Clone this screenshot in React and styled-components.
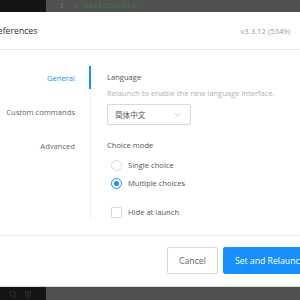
import React from 'react';
import styled, { createGlobalStyle } from 'styled-components';
import { Search, Trash2 } from 'lucide-react';

const GlobalStyle = createGlobalStyle`
  html, body {
    margin: 0;
    padding: 0;
    background: #515151;
  }
  * {
    box-sizing: border-box;
  }
`;

const Screen = styled.div`
  width: 300px;
  height: 300px;
  overflow: hidden;
  display: flex;
  flex-direction: column;
  font-family: 'Open Sans', 'Noto Sans', sans-serif;
  background: #515151;
`;

const Backdrop = styled.div`
  height: ${({ h }) => h}px;
  flex: none;
  display: grid;
  grid-template-columns: 46px 1fr;
  overflow: hidden;
`;

const SideMask = styled.div`
  background: #141416;
  display: flex;
  align-items: center;
  gap: 7px;
  padding-left: 9px;
  color: #3a3a3c;
`;

const EditorMask = styled.div`
  background: #515151;
  display: flex;
  align-items: flex-end;
  font-family: 'Liberation Mono', monospace;
  font-size: 8px;
  line-height: 10px;
  padding-bottom: 1px;
`;

const LineNo = styled.span`
  width: 28px;
  text-align: right;
  padding-right: 10px;
  color: #6f6f6f;
`;

const Code = styled.span`
  color: #3f7a3f;
`;

const Dialog = styled.div`
  height: 275px;
  flex: none;
  background: #fff;
  display: flex;
  flex-direction: column;
  border-bottom: 1px solid #dcdcdc;
`;

const Header = styled.div`
  height: 38px;
  flex: none;
  display: flex;
  align-items: center;
  justify-content: space-between;
  padding: 0 10px 0 0;
  border-bottom: 1px solid #ebebeb;
`;

const Title = styled.div`
  margin-left: -11px;
  font-size: 8.7px;
  color: #333;
`;

const Version = styled.div`
  font-size: 7.7px;
  color: #9a9a9a;
`;

const Body = styled.div`
  flex: 1;
  display: grid;
  grid-template-columns: 91px 1fr;
  padding: 16px 0;
  border-bottom: 1px solid #ebebeb;
`;

const Nav = styled.div`
  display: flex;
  flex-direction: column;
  gap: 11px;
  border-right: 1px solid #efefef;
`;

const NavItem = styled.div`
  height: 23px;
  display: flex;
  align-items: center;
  justify-content: flex-end;
  padding-right: 14px;
  margin-right: -1px;
  font-size: 7.6px;
  color: ${({ active }) => (active ? '#1890ff' : '#666')};
  border-right: 2px solid ${({ active }) => (active ? '#1890ff' : 'transparent')};
`;

const Panel = styled.div`
  padding: 4px 0 0 16px;
  display: flex;
  flex-direction: column;
  font-size: 7.6px;
  color: #555;
`;

const Label = styled.div`
  line-height: 14px;
  margin-top: ${({ gap }) => gap || 0}px;
`;

const Hint = styled.div`
  line-height: 14px;
  margin-top: 2px;
  color: #b0b0b0;
  white-space: nowrap;
`;

const Select = styled.div`
  width: 84px;
  height: 21px;
  margin-top: 4px;
  border: 1px solid #d9d9d9;
  border-radius: 2px;
  display: flex;
  align-items: center;
  justify-content: space-between;
  padding: 0 9px 0 7px;
  font-family: 'Noto Sans CJK SC', sans-serif;
  color: #555;
`;

const Chevron = styled.svg`
  width: 7px;
  height: 5px;
`;

const Option = styled.div`
  display: flex;
  align-items: center;
  gap: 6px;
  height: 14px;
  margin: ${({ gap }) => gap || 0}px 0 0 4px;
  color: #555;
`;

const Radio = styled.span`
  width: 11px;
  height: 11px;
  border-radius: 50%;
  border: 1px solid ${({ checked }) => (checked ? '#1890ff' : '#d9d9d9')};
  display: flex;
  align-items: center;
  justify-content: center;
  &::after {
    content: '';
    width: 5px;
    height: 5px;
    border-radius: 50%;
    background: ${({ checked }) => (checked ? '#1890ff' : 'transparent')};
  }
`;

const Checkbox = styled.span`
  width: 11px;
  height: 11px;
  border: 1px solid #d9d9d9;
  border-radius: 1px;
`;

const Footer = styled.div`
  flex: 1;
  display: flex;
  align-items: center;
  gap: 5px;
  padding-left: 167px;
  padding-bottom: 1px;
  white-space: nowrap;
`;

const Button = styled.div`
  flex: none;
  height: 27px;
  display: flex;
  align-items: center;
  padding: 0 11px;
  border-radius: 2px;
  font-size: 8.7px;
  border: 1px solid ${({ primary }) => (primary ? '#1890ff' : '#d9d9d9')};
  background: ${({ primary }) => (primary ? '#1890ff' : '#fff')};
  color: ${({ primary }) => (primary ? '#fff' : '#666')};
`;

export default function App() {
  return (
    <Screen>
      <GlobalStyle />
      <Backdrop h={12}>
        <SideMask />
        <EditorMask>
          <LineNo>1</LineNo>
          <Code># SwitchHosts!</Code>
        </EditorMask>
      </Backdrop>
      <Dialog>
        <Header>
          <Title>Preferences</Title>
          <Version>v3.3.12 (5349)</Version>
        </Header>
        <Body>
          <Nav>
            <NavItem active>General</NavItem>
            <NavItem>Custom commands</NavItem>
            <NavItem>Advanced</NavItem>
          </Nav>
          <Panel>
            <Label>Language</Label>
            <Hint>Relaunch to enable the new language interface.</Hint>
            <Select>
              <span>简体中文</span>
              <Chevron viewBox="0 0 7 5">
                <path d="M0.5 1 L3.5 4 L6.5 1" fill="none" stroke="#c0c0c0" strokeWidth="0.8" />
              </Chevron>
            </Select>
            <Label gap={13}>Choice mode</Label>
            <Option gap={6}>
              <Radio />
              Single choice
            </Option>
            <Option gap={4}>
              <Radio checked />
              Multiple choices
            </Option>
            <Option gap={15}>
              <Checkbox />
              Hide at launch
            </Option>
          </Panel>
        </Body>
        <Footer>
          <Button>Cancel</Button>
          <Button primary>Set and Relaunch</Button>
        </Footer>
      </Dialog>
      <Backdrop h={13}>
        <SideMask>
          <Search size={8} strokeWidth={2} />
          <Trash2 size={8} strokeWidth={2} />
        </SideMask>
        <EditorMask />
      </Backdrop>
    </Screen>
  );
}
